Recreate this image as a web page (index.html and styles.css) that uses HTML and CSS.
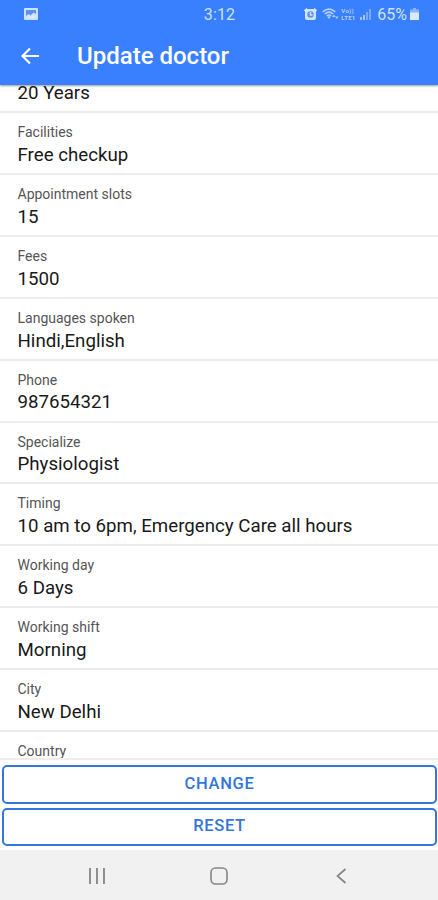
FILE: index.html
```html
<!DOCTYPE html>
<html lang="en">
<head>
<meta charset="utf-8">
<title>Update doctor</title>
<link rel="stylesheet" href="styles.css">
</head>
<body>
<div class="screen">
  <header class="header">
    <div class="status">
      <svg class="picture" viewBox="0 0 14 12"><rect width="14" height="12" rx="1" fill="#cfe2ff"/><path d="M2 2h10v4L9.500 4.500 6.500 7.500 4.500 6 2 8z" fill="#5a93f3"/><path d="M3 9.500 5 8l1.500 1L9.500 6l2.500 3v1H3z" fill="#dbe9ff"/></svg>
      <span class="clock">3:12</span>
      <div class="indicators">
        <svg class="alarm" viewBox="0 0 13 12"><rect x="1" y="1" width="11" height="11" rx="2" fill="#d3e4ff"/><path d="M.5 3 3 .7M12.500 3 10 .7" stroke="#d3e4ff" stroke-width="1.800"/><circle cx="6.500" cy="6.500" r="3.200" fill="#5b93f3"/><path d="M6.500 4v3h2" fill="none" stroke="#d3e4ff" stroke-width="1.300"/></svg>
        <svg class="wifi" viewBox="0 0 17 12"><g fill="none" stroke="#b5d0ff" stroke-width="1.600"><path d="M.8 3.800Q7-1.500 13.200 3.800M2.800 6Q7 2.200 11.200 6M4.800 8Q7 6 9.200 8"/></g><path d="M5.500 9 7 8l1.500 1L7 11zM10 9l2-2.500L13.500 9zM13 8.500h3.500L14.800 11z" fill="#b5d0ff"/></svg>
        <span class="lte"><span>Vo))</span><span>LTE1</span></span>
        <svg class="signal" viewBox="0 0 12 12"><path d="M1 9h2v3H1zM4 7h2v5H4z" fill="#a7c6ff"/><path d="M7 4h2v8H7zM10 1h2v11h-2z" fill="#7caaff"/></svg>
        <span class="percent">65%</span>
        <svg class="battery" viewBox="0 0 9 12"><path d="M3 0h3v1.500h3V12H0V1.500h3z" fill="#8bb4ff"/><path d="M0 4.500h9V12H0z" fill="#dceaff"/></svg>
      </div>
    </div>
    <div class="titlebar">
      <svg class="back" viewBox="0 0 20 18"><path d="M19 9H2M10 1.500 2.500 9l7.500 7.500" fill="none" stroke="#fff" stroke-width="2.200"/></svg>
      <h1>Update doctor</h1>
    </div>
  </header>
  <main class="content">
    <dl class="fields">
      <div class="field first"><dd>20 Years</dd></div>
      <div class="field"><dt>Facilities</dt><dd>Free checkup</dd></div>
      <div class="field"><dt>Appointment slots</dt><dd>15</dd></div>
      <div class="field"><dt>Fees</dt><dd>1500</dd></div>
      <div class="field"><dt>Languages spoken</dt><dd>Hindi,English</dd></div>
      <div class="field"><dt>Phone</dt><dd>987654321</dd></div>
      <div class="field"><dt>Specialize</dt><dd>Physiologist</dd></div>
      <div class="field"><dt>Timing</dt><dd>10 am to 6pm, Emergency Care all hours</dd></div>
      <div class="field"><dt>Working day</dt><dd>6 Days</dd></div>
      <div class="field"><dt>Working shift</dt><dd>Morning</dd></div>
      <div class="field"><dt>City</dt><dd>New Delhi</dd></div>
      <div class="field"><dt>Country</dt></div>
    </dl>
  </main>
  <div class="actions">
    <button type="button">CHANGE</button>
    <button type="button">RESET</button>
  </div>
  <nav class="navbar">
    <svg viewBox="0 0 18 18"><path d="M2 1v16M9 1v16M16 1v16" stroke="#858585" stroke-width="1.800"/></svg>
    <svg viewBox="0 0 18 18"><rect x="1" y="1" width="16" height="16" rx="4.500" fill="none" stroke="#858585" stroke-width="1.600"/></svg>
    <svg viewBox="0 0 18 18"><path d="M13.500 2 5.500 9l8 7" fill="none" stroke="#858585" stroke-width="1.700"/></svg>
  </nav>
</div>
</body>
</html>
```
FILE: styles.css
```css
* { box-sizing: border-box; }
body { margin: 0; font-family: Roboto, sans-serif; background: #fff; }
svg { display: block; flex: none; }
.screen { display: flex; flex-direction: column; width: 438px; height: 900px; overflow: hidden; }
.header { height: 85px; flex: none; background: #3880ff; color: #fff; box-shadow: 0 1px 2px rgba(0,0,0,.4); z-index: 1; }
.status { display: grid; grid-template-columns: 1fr auto 1fr; align-items: center; height: 28px; padding: 0 19px 0 24px; color: #cfe1ff; }
.picture { width: 14px; height: 12px; }
.clock { margin-right: 4px; font-size: 16px; letter-spacing: .1px; }
.indicators { display: flex; align-items: center; justify-content: flex-end; }
.alarm { width: 13px; height: 12px; margin-right: 5px; }
.wifi { width: 17px; height: 12px; margin-right: 2px; }
.lte { display: flex; flex-direction: column; width: 17px; font-size: 6px; line-height: 7px; font-weight: 700; letter-spacing: .3px; color: #b5d0ff; }
.signal { width: 12px; height: 12px; margin: 0 6px 0 1px; }
.percent { font-size: 16px; }
.battery { width: 9px; height: 12px; margin-left: 3px; }
.titlebar { display: flex; align-items: center; height: 56px; padding-left: 20px; }
.back { width: 20px; height: 18px; }
h1 { margin: 0 0 0 37px; font-size: 24px; font-weight: 500; line-height: 30px; }
.content { flex: none; height: 673px; overflow: hidden; }
.fields { margin: 0; }
.field { display: flex; flex-direction: column; height: 61.85px; padding: 11px 17px 0 17.500px; border-bottom: 2px solid #ececec; }
.field.first { height: 28.300px; padding-top: 0; }
dt { font-size: 14px; line-height: 16px; color: #555; }
dd { margin: 3.700px 0 0; font-size: 18.700px; line-height: 22px; color: #191919; }
.first dd { margin-top: -3px; }
.actions { display: flex; flex-direction: column; gap: 4px; height: 92px; flex: none; padding: 5px 1px 4px 2px; border-top: 2px solid #eee; }
.actions button { height: 38.500px; flex: none; padding: 0 0 1px; border: 2px solid #3277db; border-radius: 5px; background: #fff; color: #3176dd; font: 500 16.500px/20px Roboto, sans-serif; letter-spacing: .7px; }
.navbar { display: flex; justify-content: space-between; align-items: center; flex: 1; padding: 2px 88px 0; background: #f1f1f1; }
.navbar svg { width: 18px; height: 18px; }
```
